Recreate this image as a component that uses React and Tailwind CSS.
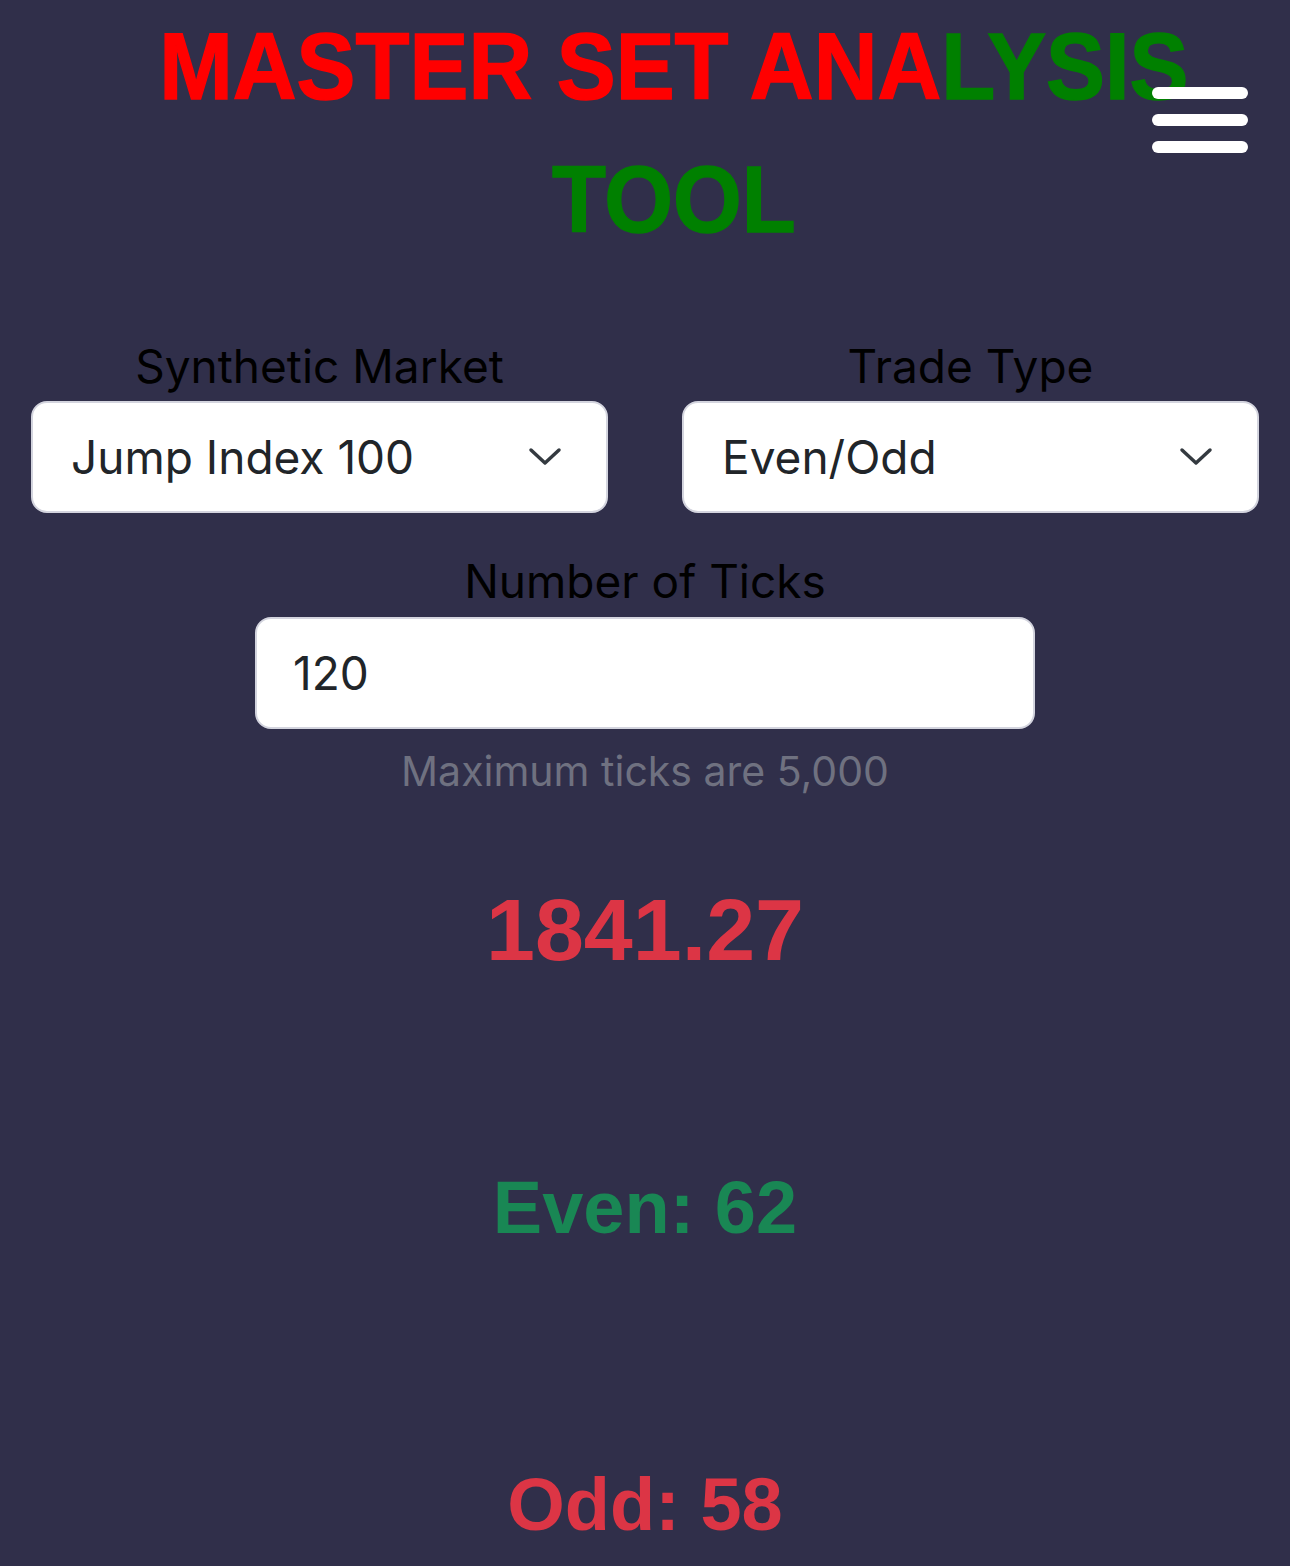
import { useState } from 'react'

const Chevron = () => (
  <svg width="34" height="20" viewBox="0 0 34 20" fill="none" className="shrink-0">
    <path d="M3 3 L17 16 L31 3" stroke="#343a40" strokeWidth="3.5" strokeLinecap="round" strokeLinejoin="round" />
  </svg>
)

const App = () => {
  const [market, setMarket] = useState('Jump Index 100')
  const [tradeType, setTradeType] = useState('Even/Odd')
  const [ticks, setTicks] = useState('120')

  return (
    <div className="min-h-screen bg-[#302f4a] relative overflow-hidden font-['Inter','Liberation_Sans',sans-serif]">
      {/* Header */}
      <header className="relative">
        <h1 className="text-center pl-[62px] scale-x-[0.93] text-[95px] leading-[133px] font-bold [-webkit-text-stroke:1.5px_currentColor] font-['Liberation_Sans','Arial',sans-serif]">
          <span className="text-[#ff0000]">MASTER SET ANA</span>
          <span className="text-[#008000]">LYSIS TOOL</span>
        </h1>
        <button className="absolute top-[87px] right-[42px] flex flex-col gap-[15px]" aria-label="menu">
          <span className="block w-[96px] h-[12px] rounded-full bg-white"></span>
          <span className="block w-[96px] h-[12px] rounded-full bg-white"></span>
          <span className="block w-[96px] h-[12px] rounded-full bg-white"></span>
        </button>
      </header>

      {/* Form */}
      <div className="mt-[72px] px-[31px] grid grid-cols-2 gap-x-[74px]">
        <div className="flex flex-col">
          <label className="text-center text-black text-[46px] leading-[56px] mb-[7px]">Synthetic Market</label>
          <div className="h-[112px] bg-white border-2 border-[#d3d4de] rounded-[16px] flex items-center justify-between pl-[38px] pr-[44px]">
            <span className="text-[#212529] text-[46px]">{market}</span>
            <Chevron />
          </div>
        </div>
        <div className="flex flex-col">
          <label className="text-center text-black text-[46px] leading-[56px] mb-[7px]">Trade Type</label>
          <div className="h-[112px] bg-white border-2 border-[#d3d4de] rounded-[16px] flex items-center justify-between pl-[38px] pr-[44px]">
            <span className="text-[#212529] text-[46px]">{tradeType}</span>
            <Chevron />
          </div>
        </div>
      </div>

      <div className="mt-[40px] flex flex-col items-center">
        <label className="text-center text-black text-[46px] leading-[56px] mb-[8px]">Number of Ticks</label>
        <input
          type="text"
          value={ticks}
          onChange={(e) => setTicks(e.target.value)}
          className="w-[780px] h-[112px] bg-white border-2 border-[#d3d4de] rounded-[16px] pl-[36px] text-[46px] text-[#212529] outline-none"
        />
        <p className="mt-[18px] text-[41px] leading-[48px] text-[#6f7180]">Maximum ticks are 5,000</p>
      </div>

      {/* Results */}
      <div className="flex flex-col items-center font-['Liberation_Sans','Arial',sans-serif] font-bold">
        <div className="mt-[85px] text-[88px] leading-[100px] text-[#dc3545]">1841.27</div>
        <div className="mt-[180px] text-[74px] leading-[96px] text-[#198754]">Even: 62</div>
        <div className="mt-[201px] text-[74px] leading-[96px] text-[#dc3545]">Odd: 58</div>
      </div>
    </div>
  )
}

export default App
